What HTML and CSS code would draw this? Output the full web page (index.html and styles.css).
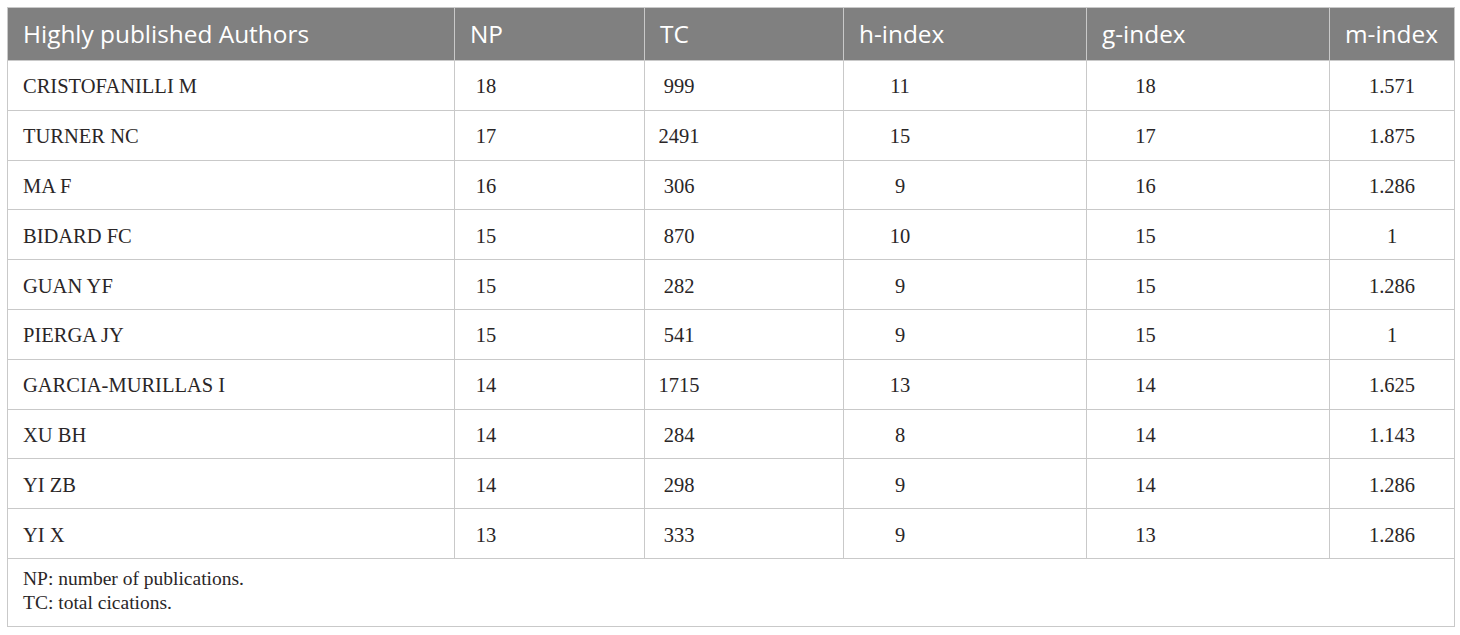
FILE: index.html
```html
<!DOCTYPE html>
<html>
<head>
<meta charset="utf-8">
<link rel="stylesheet" href="styles.css">
</head>
<body>
<div class="wrap">
<table class="data">
  <colgroup>
    <col class="c-name"><col class="c-np"><col class="c-tc"><col class="c-h"><col class="c-g"><col class="c-m">
  </colgroup>
  <thead>
    <tr>
      <th>Highly published Authors</th><th>NP</th><th>TC</th><th>h-index</th><th>g-index</th><th>m-index</th>
    </tr>
  </thead>
  <tbody>
    <tr><td class="name">CRISTOFANILLI M</td><td class="np">18</td><td class="tc">999</td><td class="h">11</td><td class="g">18</td><td class="m">1.571</td></tr>
    <tr><td class="name">TURNER NC</td><td class="np">17</td><td class="tc">2491</td><td class="h">15</td><td class="g">17</td><td class="m">1.875</td></tr>
    <tr><td class="name">MA F</td><td class="np">16</td><td class="tc">306</td><td class="h">9</td><td class="g">16</td><td class="m">1.286</td></tr>
    <tr><td class="name">BIDARD FC</td><td class="np">15</td><td class="tc">870</td><td class="h">10</td><td class="g">15</td><td class="m">1</td></tr>
    <tr><td class="name">GUAN YF</td><td class="np">15</td><td class="tc">282</td><td class="h">9</td><td class="g">15</td><td class="m">1.286</td></tr>
    <tr><td class="name">PIERGA JY</td><td class="np">15</td><td class="tc">541</td><td class="h">9</td><td class="g">15</td><td class="m">1</td></tr>
    <tr><td class="name">GARCIA-MURILLAS I</td><td class="np">14</td><td class="tc">1715</td><td class="h">13</td><td class="g">14</td><td class="m">1.625</td></tr>
    <tr><td class="name">XU BH</td><td class="np">14</td><td class="tc">284</td><td class="h">8</td><td class="g">14</td><td class="m">1.143</td></tr>
    <tr><td class="name">YI ZB</td><td class="np">14</td><td class="tc">298</td><td class="h">9</td><td class="g">14</td><td class="m">1.286</td></tr>
    <tr><td class="name">YI X</td><td class="np">13</td><td class="tc">333</td><td class="h">9</td><td class="g">13</td><td class="m">1.286</td></tr>
  </tbody>
  <tfoot>
    <tr>
      <td colspan="6" class="foot">NP: number of publications.<br>TC: total cications.</td>
    </tr>
  </tfoot>
</table>
</div>
</body>
</html>
```

FILE: styles.css
```css
html, body {
  margin: 0;
  padding: 0;
  background: #ffffff;
}

.wrap {
  padding: 7px 0 0 7px;
}

.data {
  border-collapse: collapse;
  table-layout: fixed;
  width: 1447px;
  font-family: "Liberation Serif", "Times New Roman", serif;
  color: #2a2627;
}

.c-name { width: 447px; }
.c-np { width: 190px; }
.c-tc { width: 199px; }
.c-h { width: 243px; }
.c-g { width: 243px; }
.c-m { width: 125px; }

.data th,
.data td {
  border: 1px solid #c9c9c9;
  padding: 0;
}

.data thead th {
  background: #808080;
  color: #ffffff;
  font-family: "Open Sans", "Liberation Sans", sans-serif;
  font-weight: 400;
  font-size: 24.4px;
  line-height: 30px;
  text-align: left;
  padding: 0 0 1px 15px;
  height: 51px;
  border-color: #c9c9c9;
  border-left-color: #a6a6a6;
}

.data thead th:first-child {
  border-left-color: #c9c9c9;
}

.data tbody td {
  height: 46.8px;
  font-size: 20.5px;
  line-height: 24px;
  padding-top: 2px;
  text-align: center;
}

.data tbody td.name {
  text-align: left;
  padding-left: 15px;
}

.data tbody td.np { padding-right: 127px; }
.data tbody td.tc { padding-right: 130px; }
.data tbody td.h { padding-right: 130px; }
.data tbody td.g { padding-right: 125px; }
.data tbody td.m { padding-right: 0; }

.data tfoot td.foot {
  height: 64px;
  font-size: 19.5px;
  line-height: 24px;
  padding: 0 0 3px 15px;
  vertical-align: middle;
}
```
